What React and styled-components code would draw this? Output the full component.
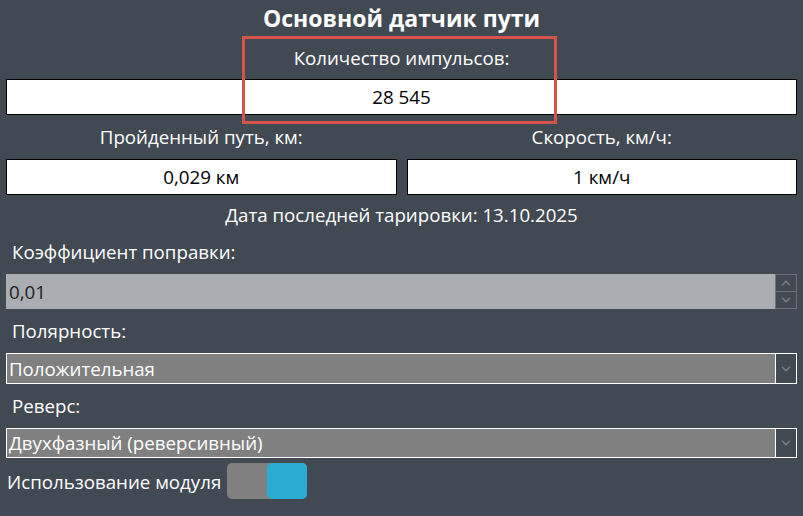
import React from "react";
import styled, { createGlobalStyle } from "styled-components";

const Global = createGlobalStyle`
  html, body { margin: 0; padding: 0; background: #414953; }
  body { font-family: "Open Sans", "Noto Sans", "Liberation Sans", sans-serif; color: #fff; }
  * { box-sizing: border-box; }
`;

const Page = styled.div`
  position: relative;
  width: 803px;
  height: 516px;
  padding: 0 6px;
  background: #414953;
  display: flex;
  flex-direction: column;
`;

const Title = styled.div`
  height: 37px;
  line-height: 37px;
  text-align: center;
  font-size: 23px;
  font-weight: 700;
  color: #fff;
`;

const CenterLabel = styled.div`
  height: ${(p) => p.$h}px;
  line-height: ${(p) => p.$h}px;
  text-align: center;
  font-size: 18.7px;
  color: #fff;
  white-space: nowrap;
`;

const SideLabel = styled.div`
  height: ${(p) => p.$h}px;
  line-height: ${(p) => p.$h}px;
  margin-bottom: ${(p) => p.$mb || 0}px;
  padding-left: 6px;
  font-size: 18.7px;
  color: #fff;
`;

const ValueBox = styled.div`
  height: 36px;
  border: 1px solid #000;
  background: #fff;
  color: #000;
  font-size: 18.8px;
  line-height: 34px;
  text-align: center;
`;

const Columns = styled.div`
  display: grid;
  grid-template-columns: 1fr 1fr;
  column-gap: 10px;
`;

const Column = styled.div`
  display: flex;
  flex-direction: column;
`;

const NumberField = styled.div`
  display: flex;
  height: 35px;
`;

const NumberValue = styled.div`
  flex: 1;
  background: #aaadb1;
  color: #1e1e1e;
  font-size: 18.7px;
  line-height: 35px;
  padding-left: 3px;
`;

const Spinner = styled.div`
  width: 22px;
  display: flex;
  flex-direction: column;
  border: 1px solid #6c7177;
`;

const SpinButton = styled.div`
  flex: 1;
  display: flex;
  align-items: center;
  justify-content: center;
  & + & { border-top: 1px solid #6c7177; }
`;

const Select = styled.div`
  display: flex;
  height: ${(p) => p.$h}px;
  border: 1px solid #fff;
`;

const SelectValue = styled.div`
  flex: 1;
  background: #808080;
  color: #fff;
  font-size: 18.7px;
  line-height: ${(p) => p.$h - 2}px;
  padding-left: 2px;
`;

const SelectArrow = styled.div`
  width: 21px;
  border-left: 1px solid #fff;
  display: flex;
  align-items: center;
  justify-content: center;
`;

const ToggleRow = styled.div`
  display: flex;
  align-items: center;
  gap: 6px;
  margin-top: 5px;
  height: 36px;
  padding-left: 1px;
  font-size: 18.7px;
`;

const Toggle = styled.div`
  width: 80px;
  height: 36px;
  border-radius: 5px;
  background: #808080;
  display: flex;
  justify-content: flex-end;
`;

const Knob = styled.div`
  width: 40px;
  height: 100%;
  border-radius: 5px;
  background: #29acd2;
`;

const Highlight = styled.div`
  position: absolute;
  left: 242px;
  top: 36px;
  width: 315px;
  height: 88px;
  border: 3px solid #d6534a;
  pointer-events: none;
`;

const Chevron = ({ up }) => (
  <svg width="10" height="6" viewBox="0 0 10 6">
    <path
      d={up ? "M1 5.2 L5 1.2 L9 5.2" : "M1 0.8 L5 4.8 L9 0.8"}
      fill="none"
      stroke="#7a7f85"
      strokeWidth="1.5"
    />
  </svg>
);

export default function App() {
  return (
    <>
      <Global />
      <Page>
        <Title>Основной датчик пути</Title>
        <CenterLabel $h={42}>Количество импульсов:</CenterLabel>
        <ValueBox>28 545</ValueBox>
        <Columns>
          <Column>
            <CenterLabel $h={44}>Пройденный путь, км:</CenterLabel>
            <ValueBox>0,029 км</ValueBox>
          </Column>
          <Column>
            <CenterLabel $h={44}>Скорость, км/ч:</CenterLabel>
            <ValueBox>1 км/ч</ValueBox>
          </Column>
        </Columns>
        <CenterLabel $h={40}>Дата последней тарировки: 13.10.2025</CenterLabel>
        <SideLabel $h={33} $mb={6}>Коэффициент поправки:</SideLabel>
        <NumberField>
          <NumberValue>0,01</NumberValue>
          <Spinner>
            <SpinButton><Chevron up /></SpinButton>
            <SpinButton><Chevron /></SpinButton>
          </Spinner>
        </NumberField>
        <SideLabel $h={44}>Полярность:</SideLabel>
        <Select $h={31}>
          <SelectValue $h={31}>Положительная</SelectValue>
          <SelectArrow><Chevron /></SelectArrow>
        </Select>
        <SideLabel $h={44}>Реверс:</SideLabel>
        <Select $h={30}>
          <SelectValue $h={30}>Двухфазный (реверсивный)</SelectValue>
          <SelectArrow><Chevron /></SelectArrow>
        </Select>
        <ToggleRow>
          <span>Использование модуля</span>
          <Toggle><Knob /></Toggle>
        </ToggleRow>
        <Highlight />
      </Page>
    </>
  );
}
